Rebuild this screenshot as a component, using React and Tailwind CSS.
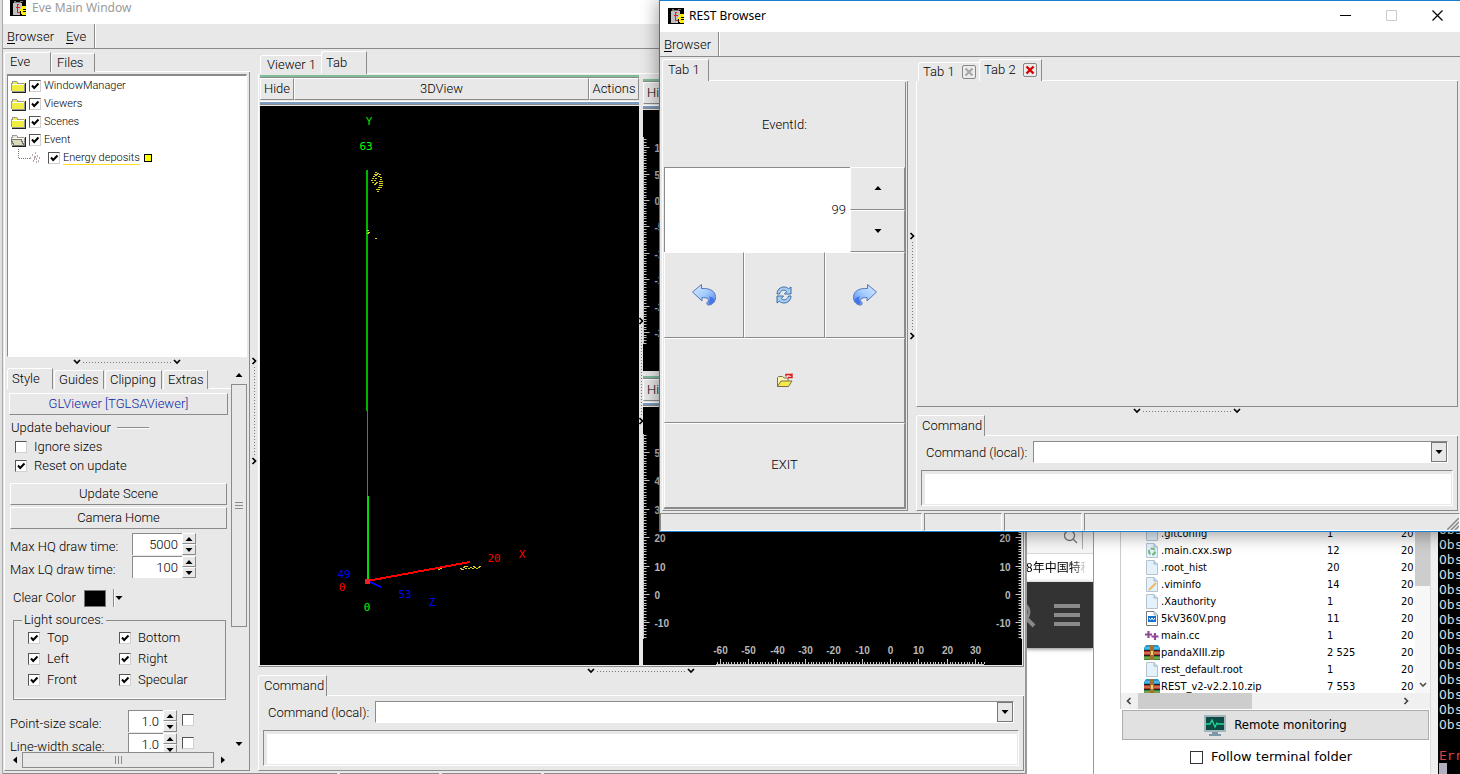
import React from "react";

const raised = "border border-t-white border-l-white border-r-[#8b8b8b] border-b-[#8b8b8b]";
const sunken = "border border-t-[#8b8b8b] border-l-[#8b8b8b] border-r-white border-b-white";

function RootLogo() {
  return (
    <svg width="16" height="16" viewBox="0 0 16 16" shapeRendering="crispEdges" aria-hidden="true">
      <rect width="16" height="16" fill="#000" />
      <path d="M3 3h1v-1h1v1h7v4h-1v2h-1v6H3z" fill="#c0c0c0" />
      <path d="M4 1h2v1h4V1h3v1h-2v1H4z" fill="#777" />
      <path d="M7 4h2v1H8v2h2v1H8v4h2v1H7V8H6V7h1z" fill="#e02020" />
      <path d="M11 7h1V6h4v3h-3v1h3v1h-3v1h3v3h-4v-1h-1v-3h-1V9h1z" fill="#ffee00" />
    </svg>
  );
}

function Chevron({ dir = "down", color = "#000" }) {
  const d = {
    down: "M1 2 4 5 7 2",
    right: "M2.5 1 5.5 4 2.5 7",
    left: "M5.5 1 2.5 4 5.5 7",
  }[dir];
  return (
    <svg className="shrink-0" width="8" height="8" viewBox="0 0 8 8" aria-hidden="true">
      <path d={d} fill="none" stroke={color} strokeWidth="1.7" />
    </svg>
  );
}

function Triangle({ dir = "down" }) {
  const d = {
    down: "M0.5 2h7L4 6z",
    up: "M0.5 6h7L4 2z",
    left: "M6 0.5v7L2 4z",
    right: "M2 0.5v7L6 4z",
  }[dir];
  return (
    <svg className="shrink-0" width="8" height="8" viewBox="0 0 8 8" aria-hidden="true">
      <path d={d} fill="#000" />
    </svg>
  );
}

function HSplitter() {
  return (
    <div className="flex h-2 shrink-0 items-center justify-center">
      <Chevron dir="down" />
      <div className="mx-0.5 h-px w-22 bg-[repeating-linear-gradient(90deg,#777_0_1px,transparent_1px_3px)]" />
      <Chevron dir="down" />
    </div>
  );
}

function VSplitter({ className = "w-2" }) {
  return (
    <div className={`${className} flex shrink-0 flex-col items-center justify-center pt-0.5`}>
      <Chevron dir="right" />
      <div className="my-0.5 h-22 w-px bg-[repeating-linear-gradient(180deg,#777_0_1px,transparent_1px_3px)]" />
      <Chevron dir="right" />
    </div>
  );
}

function Tab({ active, className = "", children }) {
  return (
    <button
      type="button"
      className={`${active ? "h-full pb-px" : "h-[19px]"} flex items-center rounded-tl-[3px] border-t border-r border-l border-t-white border-r-[#8b8b8b] border-l-white pl-1 whitespace-nowrap ${className}`}
    >
      {children}
    </button>
  );
}

function Check({ label, checked, className = "", gap = "gap-[7px]" }) {
  return (
    <label className={`flex items-center ${gap} ${className}`}>
      <span className="grid shrink-0">
        <input
          type="checkbox"
          defaultChecked={checked}
          aria-label={label ? undefined : "Enabled"}
          className="peer col-start-1 row-start-1 size-3 appearance-none border border-t-[#555] border-r-[#d0d0d0] border-b-[#d0d0d0] border-l-[#555] bg-white"
        />
        <svg
          className="pointer-events-none invisible col-start-1 row-start-1 peer-checked:visible"
          width="12"
          height="12"
          viewBox="0 0 12 12"
          aria-hidden="true"
        >
          <path d="M3 5.5 5.2 8 9.5 3.5" fill="none" stroke="#000" strokeWidth="2" />
        </svg>
      </span>
      {label && <span>{label}</span>}
    </label>
  );
}

function RaisedButton({ className = "", children, ...rest }) {
  return (
    <button type="button" className={`${raised} flex items-center justify-center ${className}`} {...rest}>
      {children}
    </button>
  );
}

function SpinRow({ id, label, value, labelWidth, fieldWidth, toggle }) {
  return (
    <div className="flex h-[23px] shrink-0 items-start pl-px">
      <label htmlFor={id} className={`${labelWidth} pt-1.5 leading-4`}>
        {label}
      </label>
      <input
        id={id}
        defaultValue={value}
        className={`${fieldWidth} h-[22px] border-t border-l border-[#8b8b8b] bg-white pr-1 text-right outline-none`}
      />
      <div className="flex h-[22px] w-3.5 flex-col">
        <RaisedButton className="flex-1" aria-label={`Increase ${label}`}>
          <Triangle dir="up" />
        </RaisedButton>
        <RaisedButton className="flex-1" aria-label={`Decrease ${label}`}>
          <Triangle dir="down" />
        </RaisedButton>
      </div>
      {toggle && <Check className="ml-[5px] h-5" />}
    </div>
  );
}

function Folder({ open }) {
  return (
    <svg width="15" height="13" viewBox="0 0 15 13" shapeRendering="crispEdges" aria-hidden="true">
      <path d="M0 3h1V2h1V1h4v1h1v1h7v8H0z" fill={open ? "#e8e8d0" : "#f0ec40"} />
      <path d="M.5 11V3.500H1.500V1.500h4l1 1.500H13" fill="none" stroke="#999" />
      <path d="M1 4.500h12" stroke="#fff" />
      <path d="M14.500 3v9M1 12.500h14" fill="none" stroke="#222" />
      <path d="M13.500 4v8M1 11.500h13" fill="none" stroke="#999" />
      {open && <path d="M0 5.500h10l3 6H3z" fill="#dcdcb8" stroke="#777" />}
    </svg>
  );
}

function TreeItem({ label, open }) {
  return (
    <li className="flex h-[18px] items-center gap-[3px] pl-[3px]">
      <Folder open={open} />
      <Check label={label} checked gap="gap-[3px]" />
    </li>
  );
}

function CommandPanel({ id }) {
  return (
    <section className="shrink-0">
      <div className="flex h-[21px] items-end">
        <Tab active className="w-[69px] pl-[5px]">
          Command
        </Tab>
        <div className="flex-1 self-end border-b border-white" />
      </div>
      <div className="h-[75px] border-r border-b border-l border-r-[#8b8b8b] border-b-[#8b8b8b] border-l-white pt-[5px] pr-1 pl-1">
        <div className="flex items-center pr-[5px] pl-[5px]">
          <label htmlFor={`${id}-combo`} className="w-[107px] shrink-0 pt-0.5">
            Command (local):
          </label>
          <div className={`${sunken} flex h-[22px] flex-1 bg-white`}>
            <input id={`${id}-combo`} className="min-w-0 flex-1 bg-white px-1 outline-none" />
            <button
              type="button"
              aria-label="Command history"
              className="flex w-4 items-center justify-center border border-[#777] bg-[#e8e8e8]"
            >
              <Triangle />
            </button>
          </div>
        </div>
        <div className={`${sunken} mt-[7px] flex h-9 p-[3px] pr-px pb-px`}>
          <textarea
            aria-label="Command output"
            className="min-w-0 flex-1 resize-none border-none bg-white outline-none"
          />
        </div>
      </div>
    </section>
  );
}

function ViewerHeader({ title }) {
  return (
    <div className="h-8 shrink-0 overflow-hidden">
      <div className="mt-px h-0.5 bg-[#7ebc9a]" />
      <div className="h-px bg-[#8b8b8b]" />
      <div className="flex h-[22px]">
        <RaisedButton className="w-[34px] shrink-0">Hide</RaisedButton>
        <RaisedButton className="min-w-0 flex-1">{title}</RaisedButton>
        <RaisedButton className="w-[50px] shrink-0">Actions</RaisedButton>
      </div>
      <div className="mt-px h-px bg-white" />
      <div className="h-0.5 bg-[#7a9cc0]" />
      <div className="h-px bg-[#8b8b8b]" />
    </div>
  );
}

const hits = [
  [115, 66], [117, 67], [114, 68], [116, 68], [119, 68], [115, 69], [113, 70], [118, 70], [120, 71], [112, 72],
  [115, 72], [120, 73], [111, 74], [114, 74], [121, 75], [112, 76], [119, 75], [121, 77], [115, 77], [119, 77],
  [114, 78], [121, 79], [119, 79], [116, 76], [120, 81], [118, 81], [118, 83], [116, 83], [117, 85],
  [107, 124], [108, 126], [107, 127], [115, 132],
  [178, 463], [180, 462], [200, 462], [202, 463], [203, 461], [201, 463], [205, 462], [204, 460], [206, 460],
  [208, 462], [210, 461], [212, 462], [214, 461], [213, 460], [216, 462], [218, 461], [219, 460],
];

function Scene3D() {
  return (
    <svg
      className="block h-0 min-h-full w-full bg-black font-['DejaVu_Sans_Mono',monospace] text-[11px]"
      role="img"
      aria-label="3D view of energy deposits"
    >
      <g shapeRendering="crispEdges">
        <path d="M107 64V305" stroke="#00b400" strokeWidth="2" />
        <path d="M107.5 305V390" stroke="#00b400" strokeWidth="1" />
        <path d="M108 390V475" stroke="#00e000" strokeWidth="2" />
        <path d="M107 475 210 456" stroke="#f00" strokeWidth="2" />
        <path d="M108 475 121 481" stroke="#00f" strokeWidth="2" />
        <rect x="105" y="473" width="5" height="5" fill="#f02020" />
        {hits.map(([x, y]) => (
          <rect key={`${x}-${y}`} x={x} y={y} width="2" height="1" fill="#d8d020" />
        ))}
      </g>
      <g textAnchor="middle">
        <text x="109" y="19" fill="#00e000">Y</text>
        <text x="106" y="44" fill="#00ff00">63</text>
        <text x="84" y="472" fill="#0000ff">49</text>
        <text x="82" y="485" fill="#ff0000">0</text>
        <text x="107" y="505" fill="#00ff00">0</text>
        <text x="145" y="492" fill="#0000ff">53</text>
        <text x="172" y="500" fill="#0000ff">Z</text>
        <text x="234" y="456" fill="#ff0000">20</text>
        <text x="262" y="452" fill="#ff0000">X</text>
      </g>
    </svg>
  );
}

function ticksBetween(origin, minor, from, to) {
  const out = [];
  for (let i = Math.ceil((from - origin) / minor); origin + i * minor <= to; i++) {
    out.push({ at: Math.round(origin + i * minor) + 0.5, major: i });
  }
  return out;
}

function VerticalRuler({ x, side, from, to, origin, step, divisions, unit }) {
  const ticks = ticksBetween(origin, step / divisions, from, to);
  const s = side === "left" ? 1 : -1;
  return (
    <g>
      <path d={`M${x} ${from}V${to}`} stroke="#c8c8c8" />
      {ticks.map(({ at, major }) => (
        <g key={at}>
          <path d={`M${x} ${at}h${s * (major % divisions ? 3 : 6)}`} stroke="#c8c8c8" />
          {major % divisions === 0 && (
            <text x={x + s * 11} y={at + 4} textAnchor={side === "left" ? "start" : "end"} fill="#b8b8b8">
              {(-major / divisions) * unit || 0}
            </text>
          )}
        </g>
      ))}
    </g>
  );
}

function Projection({ children, label }) {
  return (
    <svg
      className="block h-0 min-h-full w-full bg-black font-['Liberation_Sans',sans-serif] text-[10px] font-bold"
      role="img"
      aria-label={label}
    >
      {children}
    </svg>
  );
}

function RhoZ() {
  const ticks = ticksBetween(247, 28.35 / 10, 73, 341);
  return (
    <Projection label="Lower projection">
      <VerticalRuler x={0.5} side="left" from={27} to={232} origin={187} step={28.4} divisions={10} unit={10} />
      <VerticalRuler x={378.5} side="right" from={27} to={232} origin={187} step={28.4} divisions={10} unit={10} />
      <path d="M73 257.5H341" stroke="#c8c8c8" />
      {ticks.map(({ at, major }) => (
        <g key={at}>
          <path d={`M${at} 257v${major % 10 ? -2 : -5}`} stroke="#c8c8c8" />
          {major % 10 === 0 && (
            <text x={at} y="247" textAnchor="middle" fill="#b8b8b8">
              {major}
            </text>
          )}
        </g>
      ))}
    </Projection>
  );
}

function MenuBar({ items, width }) {
  return (
    <nav className="flex h-[25px] shrink-0 border-b border-[#8b8b8b]">
      <div className={`${width} flex items-center gap-3 border-r border-[#8b8b8b] pt-px pl-1`}>
        {items.map((item) => (
          <button type="button" key={item}>
            <span className="underline underline-offset-2">{item[0]}</span>
            {item.slice(1)}
          </button>
        ))}
      </div>
      <div className="flex-1 border-l border-white" />
    </nav>
  );
}

const lights = ["Top", "Bottom", "Left", "Right", "Front", "Specular"];

function StylePanel() {
  return (
    <div className="flex min-h-0 flex-1 flex-col overflow-hidden pt-1 pr-[3px] pl-[2px]">
      <RaisedButton className="h-[22px] shrink-0 text-[#0a1fa0]">GLViewer [TGLSAViewer]</RaisedButton>
      <div className="mt-1 flex h-[18px] shrink-0 items-center gap-1.5 pl-0.5">
        Update behaviour
        <div className="h-0.5 w-8 border-t border-b border-t-[#8b8b8b] border-b-white" />
      </div>
      <Check label="Ignore sizes" className="h-[19px] shrink-0 pl-1.5" />
      <Check label="Reset on update" checked className="h-[19px] shrink-0 pl-1.5" />
      <RaisedButton className="mx-px mt-2 h-[22px] shrink-0">Update Scene</RaisedButton>
      <RaisedButton className="mx-px mt-0.5 mb-1 h-[22px] shrink-0">Camera Home</RaisedButton>
      <SpinRow id="hq" label="Max HQ draw time:" value="5000" labelWidth="w-[122px]" fieldWidth="w-[50px]" />
      <SpinRow id="lq" label="Max LQ draw time:" value="100" labelWidth="w-[122px]" fieldWidth="w-[50px]" />
      <div className="flex h-[34px] shrink-0 items-center pt-1 pl-1">
        <span className="w-[71px]">Clear Color</span>
        <button type="button" aria-label="Clear color swatch" className="h-[17px] w-[22px] border border-[#777] bg-black" />
        <span className="ml-[7px] h-[18px] border-r border-l border-r-white border-l-[#8b8b8b]" />
        <Triangle />
      </div>
      <fieldset className="mr-0.5 ml-1 shrink-0 border border-[#8b8b8b] px-0 pb-[9px] shadow-[inset_0_-1px_0_#fff]">
        <legend className="ml-2 h-3.5 px-0.5 leading-3.5">Light sources:</legend>
        <div className="grid grid-cols-[91px_1fr] pl-3.5">
          {lights.map((name) => (
            <Check key={name} label={name} checked className="h-[21px]" />
          ))}
        </div>
      </fieldset>
      <div className="h-2.5 shrink-0" />
      <SpinRow id="ps" label="Point-size scale:" value="1.0" labelWidth="w-[118px]" fieldWidth="w-[35px]" toggle />
      <SpinRow id="lw" label="Line-width scale:" value="1.0" labelWidth="w-[118px]" fieldWidth="w-[35px]" toggle />
    </div>
  );
}

function EvePanel() {
  return (
    <div className="flex w-[246px] shrink-0 flex-col pt-[3px]">
      <div className="flex h-5 shrink-0 items-end">
        <Tab active className="w-[47px] pl-[5px]">Eve</Tab>
        <Tab className="w-11 pl-[5px]">Files</Tab>
        <div className="flex-1 border-b border-white" />
      </div>
      <div className="flex min-h-0 flex-1 flex-col border-r border-b border-l border-r-[#8b8b8b] border-b-[#8b8b8b] border-l-white px-0.5 pt-0.5">
        <div className={`${sunken} min-h-0 flex-1 overflow-hidden border-t-2 bg-white pt-px text-[11px]`}>
          <ul>
            <TreeItem label="WindowManager" />
            <TreeItem label="Viewers" />
            <TreeItem label="Scenes" />
            <TreeItem label="Event" open />
            <li className="flex h-[18px] items-center gap-1 pl-[9px]">
              <svg width="27" height="18" viewBox="0 0 27 18" aria-hidden="true">
                <path d="M1.500 0V9.500H13" fill="none" stroke="#777" strokeDasharray="1 1" />
                <path
                  d="M13 9h1M15 6h1M18 4h1M17 8h2M20 7h1M19 10h1M22 9h1M16 12h1M19 13h1M21 12h1M17 10h1"
                  stroke="#705050"
                />
              </svg>
              <Check checked label={<span className="border-b border-yellow-300">Energy deposits</span>} gap="gap-[3px]" />
              <span className="size-2 border border-black bg-[#ffff00]" />
            </li>
          </ul>
        </div>
        <div className="pt-px">
          <HSplitter />
        </div>
        <div className="flex h-[386px] shrink-0">
          <div className="flex min-w-0 flex-1 flex-col">
            <div className="mt-0.5 flex h-[21px] shrink-0 items-end gap-px">
              <Tab active className="w-[46px]">Style</Tab>
              <Tab className="w-[50px]">Guides</Tab>
              <Tab className="w-[57px]">Clipping</Tab>
              <Tab className="w-[45px]">Extras</Tab>
              <div className="flex-1 border-b border-white" />
            </div>
            <StylePanel />
          </div>
          <div className="flex w-4 shrink-0 flex-col">
            <button type="button" aria-label="Scroll up" className="flex h-[18px] items-center justify-center">
              <Triangle dir="up" />
            </button>
            <div className="flex h-[243px] flex-col items-center justify-center gap-0.5 border border-[#8b8b8b]">
              <span className="h-px w-2 bg-[#8b8b8b]" />
              <span className="h-px w-2 bg-[#8b8b8b]" />
              <span className="h-px w-2 bg-[#8b8b8b]" />
            </div>
            <div className="flex-1" />
            <button type="button" aria-label="Scroll down" className="flex h-4 items-center justify-center">
              <Triangle />
            </button>
          </div>
        </div>
        <div className="mb-0.5 flex h-4 shrink-0 items-center pr-4">
          <button type="button" aria-label="Scroll left" className="flex w-[15px] justify-center">
            <Triangle dir="left" />
          </button>
          <div className="flex h-4 flex-1 items-center justify-center gap-0.5 border border-[#8b8b8b]">
            <span className="h-2 w-px bg-[#8b8b8b]" />
            <span className="h-2 w-px bg-[#8b8b8b]" />
            <span className="h-2 w-px bg-[#8b8b8b]" />
          </div>
          <button type="button" aria-label="Scroll right" className="flex w-[17px] justify-center">
            <Triangle dir="right" />
          </button>
        </div>
      </div>
    </div>
  );
}

function EveWindow() {
  return (
    <main className="absolute inset-y-0 right-[433px] left-0.5 flex flex-col overflow-hidden border-r-2 border-l border-r-[#9a9a9a] border-l-[#a8a8a8] bg-[#e8e8e8]">
      <header className="flex h-6 shrink-0 items-start gap-1.5 bg-white pl-[7px] font-['Noto_Sans',sans-serif] text-xs leading-4 font-normal text-[#9a9a9a]">
        <RootLogo />
        Eve Main Window
      </header>
      <MenuBar items={["Browser", "Eve"]} width="w-[92px]" />
      <div className="flex min-h-0 flex-1 pr-px pl-px">
        <EvePanel />
        <VSplitter />
        <div className="flex min-w-0 flex-1 flex-col pt-0.5">
          <div className="flex h-[23px] shrink-0 items-end pl-0.5">
            <Tab className="w-[61px] border-r-0 pl-1.5">Viewer 1</Tab>
            <Tab active className="w-[46px]">Tab</Tab>
            <div className="flex-1 border-b border-white" />
          </div>
          <div className="flex min-h-0 flex-1 border-r border-b border-l border-r-[#8b8b8b] border-b-[#8b8b8b] border-l-white px-px pb-px">
            <div className="flex min-w-0 flex-1 flex-col">
              <ViewerHeader title="3DView" />
              <div className="min-h-0 flex-1">
                <Scene3D />
              </div>
            </div>
            <VSplitter className="w-1" />
            <div className="flex min-w-0 flex-1 flex-col gap-1 pt-1">
              <div className="flex min-h-0 flex-1 flex-col">
                <ViewerHeader title="RPhi" />
                <div className="min-h-0 flex-1">
                  <Projection label="Upper projection">
                    <VerticalRuler x={0.5} side="left" from={27} to={234} origin={90} step={26.4} divisions={10} unit={5} />
                  </Projection>
                </div>
              </div>
              <div className="flex h-[290px] shrink-0 flex-col">
                <ViewerHeader title="RhoZ" />
                <div className="min-h-0 flex-1">
                  <RhoZ />
                </div>
              </div>
            </div>
          </div>
          <HSplitter />
          <CommandPanel id="eve" />
        </div>
      </div>
      <footer className="flex h-[3px] shrink-0 gap-[3px] pt-0.5">
        <span className="w-[334px] bg-[#8b8b8b]" />
        <span className="w-[99px] bg-[#8b8b8b]" />
        <span className="w-[99px] bg-[#8b8b8b]" />
        <span className="flex-1 bg-[#8b8b8b]" />
      </footer>
    </main>
  );
}

function CurvedArrow({ flip }) {
  const id = flip ? "arrow-right" : "arrow-left";
  return (
    <svg width="26" height="24" viewBox="0 0 26 24" aria-hidden="true" className={flip ? "-scale-x-100" : ""}>
      <defs>
        <linearGradient id={id} x1="0" y1="0" x2="1" y2="1">
          <stop offset="0" stopColor="#d8ecff" />
          <stop offset="0.5" stopColor="#a4ccff" />
          <stop offset="1" stopColor="#4c80f0" />
        </linearGradient>
      </defs>
      <path
        d="M1.500 9 10.500 1.500v4C18 5 24 7.500 24.500 13.500c.3 4.500-2 7.500-6 8.500-2.500.5-3.500-1.500-2-3 1.800-1.500 1.500-4.500-5.500-4.500v3.500z"
        fill={`url(#${id})`}
        stroke="#5878b8"
        strokeLinejoin="round"
      />
      <path d="M17.500 19c1.500-1.500 2-3.500.5-5.500 3 .5 5 2 5.500 3-.6 2.600-2.500 4.200-5 5z" fill="#4474e8" />
    </svg>
  );
}

function Refresh() {
  return (
    <svg width="16" height="18" viewBox="0 0 16 18" aria-hidden="true">
      <path
        d="M1 8C1 4 4 1 8 1c2 0 3.500.7 4.600 1.800L15 1v7H8.500l2.200-2.500C8.500 3 4.500 4 3.500 8z"
        fill="#a9cdf0"
        stroke="#3a6ea8"
      />
      <path
        d="M15 10c0 4-3 7-7 7-2 0-3.500-.7-4.600-1.800L1 17v-7h6.500l-2.200 2.500c2.200 2.500 6.200 1.500 7.200-2.500z"
        fill="#a9cdf0"
        stroke="#3a6ea8"
      />
    </svg>
  );
}

function OpenFolder() {
  return (
    <svg width="17" height="15" viewBox="0 0 17 15" aria-hidden="true">
      <path d="M1.500 13.500v-9l1-1h4l1.500 1.500h4v8.500z" fill="#fdf6b0" stroke="#7a7050" />
      <path d="M1.500 13.500 5 8h11l-3.500 5.500z" fill="#f4ea48" stroke="#7a7050" />
      <path d="M10 3.500V1.500h4.500V3M16 .5V4.500h-4" fill="none" stroke="#e01818" strokeWidth="1.400" />
    </svg>
  );
}

function CloseMark({ active }) {
  return (
    <span className="flex size-3.5 items-center justify-center rounded-[2px] border border-[#888] bg-[#ececec]">
      <svg width="10" height="10" viewBox="0 0 10 10" aria-hidden="true">
        <path d="M1.500 1.500l7 7M8.500 1.500l-7 7" stroke={active ? "#d80000" : "#aaa"} strokeWidth="2.400" />
      </svg>
    </span>
  );
}

function RestWindow() {
  return (
    <section className="absolute top-0 right-0 left-[659px] flex h-[532px] flex-col border-t border-b border-l border-[#1a7fd0] bg-[#e8e8e8] shadow-[0_2px_16px_2px_rgba(0,0,0,0.35)]">
      <header className="flex h-[31px] shrink-0 items-center bg-white pb-0.5 pl-2 font-['Noto_Sans',sans-serif] text-xs font-normal">
        <RootLogo />
        <span className="flex-1 pl-[5px]">REST Browser</span>
        <button type="button" aria-label="Minimize" className="flex w-[46px] justify-center">
          <svg width="11" height="11" viewBox="0 0 11 11"><path d="M0 5.500h11" stroke="#000" /></svg>
        </button>
        <button type="button" aria-label="Maximize" className="flex w-[46px] justify-center">
          <svg width="11" height="11" viewBox="0 0 11 11"><path d="M.5.5h10v10H.5z" fill="none" stroke="#ccc" /></svg>
        </button>
        <button type="button" aria-label="Close" className="flex w-[46px] justify-center">
          <svg width="11" height="11" viewBox="0 0 11 11"><path d="M.5.5l10 10M10.500.5l-10 10" stroke="#000" strokeWidth="1.200" /></svg>
        </button>
      </header>
      <MenuBar items={["Browser"]} width="w-[59px]" />
      <div className="flex min-h-0 flex-1 pt-0.5 pr-0.5 pl-0.5">
        <div className="flex w-[246px] shrink-0 flex-col">
          <div className="flex h-[22px] shrink-0 items-end">
            <Tab active className="w-[47px] pl-[5px]">Tab 1</Tab>
            <div className="flex-1 border-b border-white" />
          </div>
          <div className="flex min-h-0 flex-1 flex-col border-r border-b border-l border-r-[#8b8b8b] border-b-[#8b8b8b] border-l-white pt-px pr-px pb-px pl-px">
            <div className="grid min-h-0 flex-1 grid-rows-5 border-r border-b border-[#8b8b8b]">
              <label htmlFor="event-id" className="flex items-center justify-center">
                EventId:
              </label>
              <div className="flex min-h-0">
                <input
                  id="event-id"
                  defaultValue="99"
                  className="min-w-0 flex-1 border-t border-l border-[#8b8b8b] bg-white pr-1 text-right outline-none"
                />
                <div className="flex w-[55px] flex-col">
                  <RaisedButton className="flex-1" aria-label="Next event number"><Triangle dir="up" /></RaisedButton>
                  <RaisedButton className="flex-1" aria-label="Previous event number"><Triangle /></RaisedButton>
                </div>
              </div>
              <div className="grid grid-cols-3">
                <RaisedButton aria-label="Previous event"><CurvedArrow /></RaisedButton>
                <RaisedButton aria-label="Reload event"><Refresh /></RaisedButton>
                <RaisedButton aria-label="Next event"><CurvedArrow flip /></RaisedButton>
              </div>
              <RaisedButton aria-label="Open file"><OpenFolder /></RaisedButton>
              <RaisedButton>EXIT</RaisedButton>
            </div>
          </div>
        </div>
        <VSplitter />
        <div className="flex min-w-0 flex-1 flex-col">
          <div className="flex h-[22px] shrink-0 items-end pl-0.5">
            <Tab className="w-[61px] gap-[7px] border-r-0">Tab 1 <CloseMark /></Tab>
            <Tab active className="w-[63px] gap-[7px]">Tab 2 <CloseMark active /></Tab>
            <div className="flex-1 border-b border-white" />
          </div>
          <div className="flex-1 border-r border-b border-l border-r-[#8b8b8b] border-b-[#8b8b8b] border-l-white" />
          <HSplitter />
          <CommandPanel id="rest" />
        </div>
      </div>
      <footer className="flex h-5 shrink-0 gap-0.5 pt-0.5">
        <span className={`${sunken} w-[262px]`} />
        <span className={`${sunken} w-[78px]`} />
        <span className={`${sunken} w-[78px]`} />
        <span className={`${sunken} flex flex-1 items-end justify-end`}>
          <svg width="12" height="12" viewBox="0 0 12 12" aria-hidden="true">
            <path d="M0 12 12 0M4 12l8-8M8 12l4-4" stroke="#888" strokeWidth="1.500" />
          </svg>
        </span>
      </footer>
    </section>
  );
}

function WebPage() {
  return (
    <section className="absolute top-[520px] right-[366px] bottom-0 left-[1026px] overflow-hidden border-r border-[#999] bg-white">
      <div className="flex h-[34px] items-center justify-end border-b border-[#d8d8d8] bg-[#f7f7f7] pr-2.5">
        <div className="flex h-6 items-center border-r border-[#aaa] pr-1">
          <svg width="15" height="15" viewBox="0 0 15 15" aria-hidden="true">
            <circle cx="6.500" cy="6.500" r="5" fill="none" stroke="#777" strokeWidth="1.300" />
            <path d="M10 10l4 4" stroke="#777" strokeWidth="1.300" />
          </svg>
        </div>
      </div>
      <div className="h-7 overflow-hidden mask-r-from-70% mask-r-to-90% font-['Noto_Sans_CJK_SC',sans-serif] text-xs leading-[26px] font-normal whitespace-nowrap">
        8年中国特种
      </div>
      <div className="flex h-[66px] items-center justify-between bg-[#333] pr-3 shadow-[0_1px_4px_rgba(0,0,0,0.5)]">
        <svg width="12" height="32" viewBox="0 0 12 32" aria-hidden="true">
          <circle cx="-6" cy="13" r="9" fill="none" stroke="#888" strokeWidth="3" />
          <path d="M0 19l8 8" stroke="#888" strokeWidth="4" />
        </svg>
        <svg width="28" height="24" viewBox="0 0 28 24" aria-hidden="true">
          <path d="M1 3h26M1 12h26M1 21h26" stroke="#8a8a8a" strokeWidth="4" />
        </svg>
      </div>
    </section>
  );
}

function FileIcon({ kind }) {
  if (kind === "zip") {
    return (
      <svg width="16" height="16" viewBox="0 0 16 16" aria-hidden="true">
        <path d="M2 0h12l2 3v3H0V3z" fill="#1e9ad0" />
        <path d="M1 3h14" stroke="#7cd0f0" />
        <path d="M0 6h16v5H0z" fill="#b8392a" />
        <path d="M0 11h16v4H0z" fill="#2f8a30" />
        <path d="M0 5.500h16M0 10.500h16" stroke="#222" />
        <path d="M0 8h16M0 13h16" stroke="#e8c080" strokeWidth=".8" />
        <path d="M6 0h4v15H6z" fill="#a8702c" />
        <path d="M7 6h2v4H7z" fill="#f0d070" />
      </svg>
    );
  }
  if (kind === "cc") {
    return (
      <svg width="14" height="10" viewBox="0 0 14 10" aria-hidden="true">
        <path d="M3.500 0v7M0 3.500h7M10 2v7M6.500 5.500h7" stroke="#94489a" strokeWidth="2.200" />
      </svg>
    );
  }
  return (
    <svg width="12" height="15" viewBox="0 0 12 15" aria-hidden="true">
      <path d="M.5.5h7.500l3.500 3.500v10.500H.5z" fill={kind === "png" ? "#fff" : "#e4f1fb"} stroke={kind === "png" ? "#777" : "#b4c4d0"} />
      <path d="M8 .5v3.500h3.500" fill="#c8e0f0" stroke="#a4b4c0" />
      {kind === "png" && <path d="M2 5h8v6H2z" fill="#1470d0" />}
      {kind === "png" && <path d="M3 7l1.500 2L6 7l1.500 2L9 7" fill="none" stroke="#fff" />}
      {kind === "swp" && <circle cx="6" cy="8.500" r="3" fill="none" stroke="#70b880" strokeWidth="2" strokeDasharray="4.500 1.700" />}
      {kind === "edit" && <path d="M3 13l7-7" stroke="#f0b860" strokeWidth="2" />}
    </svg>
  );
}

const files = [
  [".gitconfig", "1", "doc"],
  [".main.cxx.swp", "12", "swp"],
  [".root_hist", "20", "doc"],
  [".viminfo", "14", "edit"],
  [".Xauthority", "1", "doc"],
  ["5kV360V.png", "11", "png"],
  ["main.cc", "1", "cc"],
  ["pandaXIII.zip", "2 525", "zip"],
  ["rest_default.root", "1", "doc"],
  ["REST_v2-v2.2.10.zip", "7 553", "zip"],
];

function TerminalClient() {
  return (
    <section className="absolute top-[525px] right-0 bottom-0 left-[1094px] flex bg-white font-normal">
      <div className="flex w-[337px] flex-col border-r border-[#ddd] pl-[26px]">
        <div className="flex h-[168px] shrink-0 overflow-hidden border-l border-[#ccc]">
          <div className="min-w-0 flex-1">
            <table className="w-full table-fixed font-['DejaVu_Sans_Condensed','DejaVu_Sans',sans-serif] text-[11px] leading-4 whitespace-nowrap">
              <tbody>
                {files.map(([name, size, kind]) => (
                  <tr key={name} className="h-[17px]">
                    <td className="w-[206px] p-0">
                      <div className="flex items-center pl-[22px]">
                        <span className="flex w-[18px] justify-center">
                          <FileIcon kind={kind} />
                        </span>
                        {name}
                      </div>
                    </td>
                    <td className="w-[74px] p-0">{size}</td>
                    <td className="p-0">20</td>
                  </tr>
                ))}
              </tbody>
            </table>
          </div>
          <div className="flex w-[15px] flex-col items-center justify-between bg-[#f7f7f7] pb-1">
            <div className="h-[61px] w-full bg-[#cdcdcd]" />
            <Chevron dir="down" color="#555" />
          </div>
        </div>
        <div className="flex h-4 shrink-0 items-center border-l border-[#ccc] bg-[#f0f0f0] pr-5 pl-1">
          <Chevron dir="left" color="#444" />
          <div className="ml-[5px] h-4 w-[114px] bg-[#cdcdcd]" />
          <div className="flex-1" />
          <Chevron dir="right" color="#444" />
        </div>
        <button
          type="button"
          className="mt-px mr-px ml-0.5 flex h-[30px] shrink-0 items-center justify-center gap-2 border border-[#adadad] bg-[#e1e1e1] font-['DejaVu_Sans_Condensed','DejaVu_Sans',sans-serif] text-[13px]"
        >
          <svg width="22" height="21" viewBox="0 0 22 21" aria-hidden="true">
            <rect width="22" height="17" fill="#a4b4bc" />
            <rect x="2" y="2" width="18" height="13" fill="#0c4c44" />
            <path d="M2 9h4l2-4 3 7 2-4 1 1h6" fill="none" stroke="#20d898" strokeWidth="1.300" />
            <path d="M8 17h6v2h3v2H5v-2h3z" fill="#7c98a8" />
          </svg>
          Remote monitoring
        </button>
        <label className="flex h-9 items-center justify-center gap-2 pr-2 font-['DejaVu_Sans',sans-serif] text-[13px]">
          <input type="checkbox" className="size-[13px] appearance-none border border-[#333] bg-white" />
          Follow terminal folder
        </label>
      </div>
      <div className="w-[7px] bg-[#f0f0f0]" />
      <div className="min-w-0 flex-1 overflow-hidden bg-black pl-px font-['DejaVu_Sans_Mono',monospace] text-[13px] leading-[15px] text-[#d0dce0]">
        <div className="-mt-[3px]">
          {Array.from({ length: 14 }, (_, i) => (
            <div key={i}>Obs</div>
          ))}
        </div>
        <div className="pt-4 text-[#e04040]">Err</div>
        <div className="h-4 w-2 bg-[#b0b0c0]" />
      </div>
    </section>
  );
}

export default function App() {
  return (
    <div className="relative h-screen w-full overflow-hidden bg-[#e0e0e0] font-['Roboto',sans-serif] text-[13px] leading-4 font-[350] text-black">
      <WebPage />
      <TerminalClient />
      <EveWindow />
      <RestWindow />
    </div>
  );
}
